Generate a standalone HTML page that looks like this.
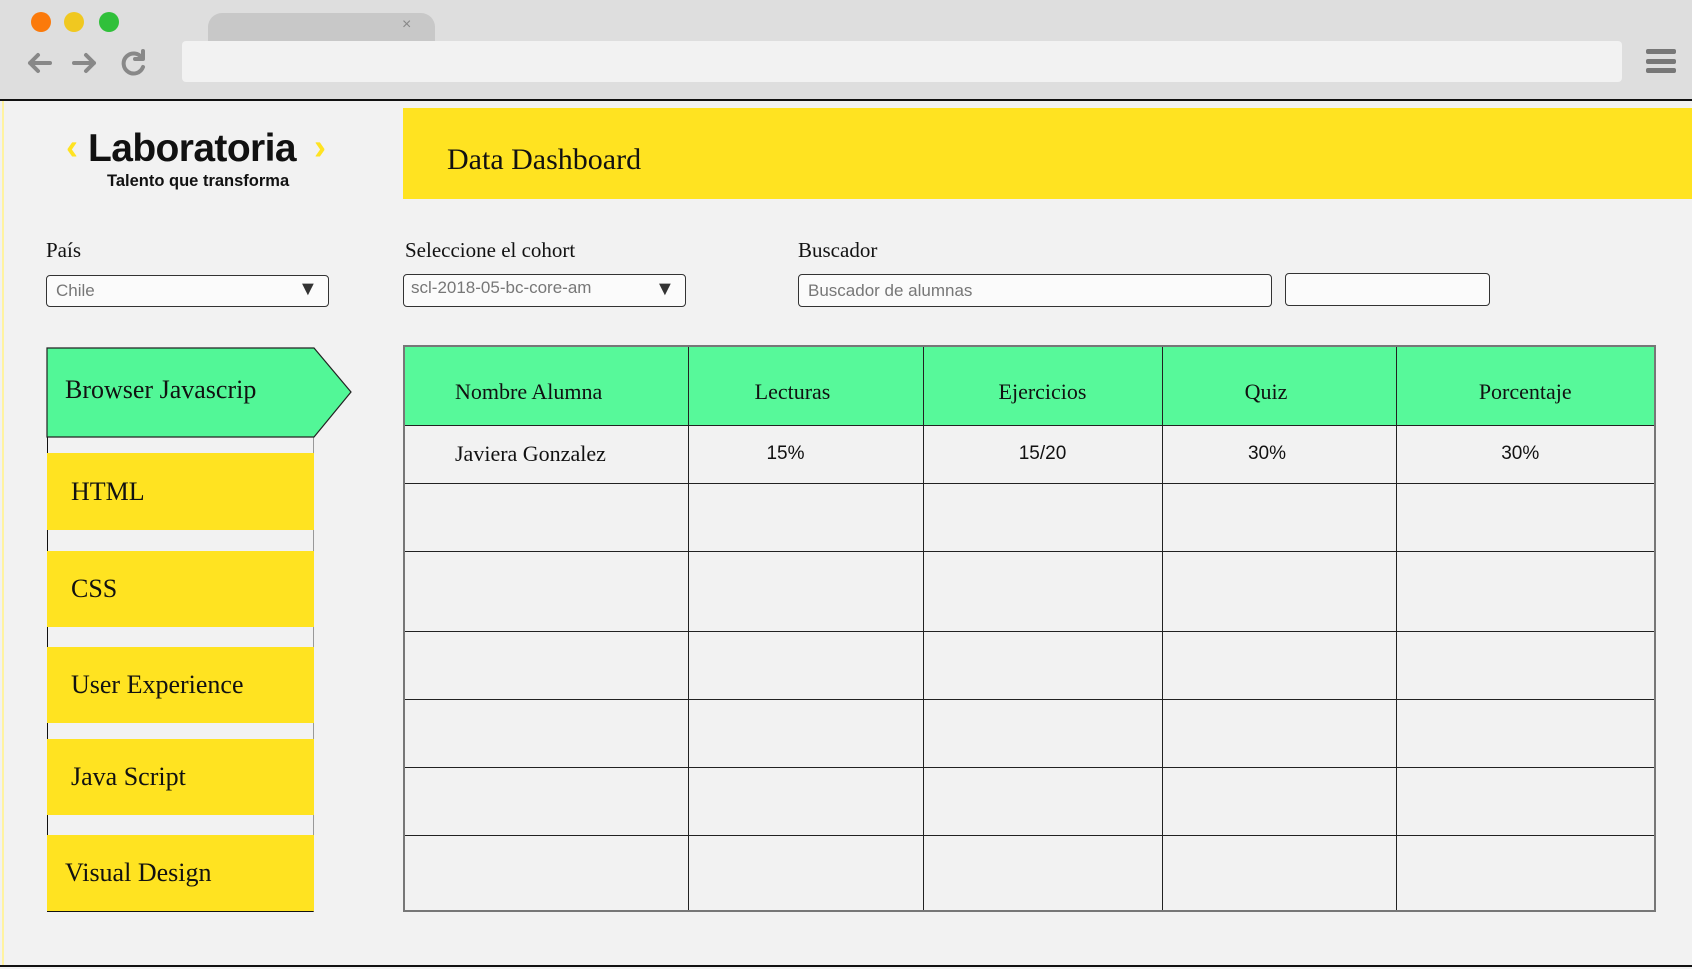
<!DOCTYPE html>
<html><head><meta charset="utf-8"><style>
*{margin:0;padding:0;box-sizing:border-box}
body{width:1692px;height:969px;overflow:hidden;background:#f2f2f2;position:relative;font-family:"Liberation Serif",serif;color:#111}
.abs{position:absolute}
.chrome{left:0;top:0;width:1692px;height:99px;background:#dedede}
.dot{width:20px;height:20px;border-radius:50%;top:12px}
.serif{font-family:"Liberation Serif",serif}
.sans{font-family:"Liberation Sans",sans-serif}
.box{background:#fbfbfb;border:1.5px solid #333;border-radius:4px}
.item{left:47px;width:267px;background:#ffe321;font-size:26px;padding-left:24px;display:flex;align-items:center}
table{border-collapse:collapse;position:absolute;left:403px;top:345px;width:1253px}
td{border:1.5px solid #222;text-align:center;font-size:22px}
</style></head><body>
<div class="abs chrome"></div>
<div class="abs dot" style="left:31px;background:#fb7a0b"></div>
<div class="abs dot" style="left:64px;background:#f0c820"></div>
<div class="abs dot" style="left:99px;background:#30c03a"></div>
<div class="abs" style="left:208px;top:13px;width:227px;height:28px;background:#c8c8c8;border-radius:14px 14px 0 0"></div>
<div class="abs sans" style="left:402px;top:16px;font-size:16px;color:#888">×</div>
<svg class="abs" style="left:24px;top:48px" width="130" height="30" viewBox="0 0 130 30"><g stroke="#888" stroke-width="4" fill="none" stroke-linecap="round" stroke-linejoin="round"><path d="M26 15H6M14 7l-8 8 8 8"/><path d="M50 15h20M62 7l8 8-8 8"/><path d="M118 10a10 10 0 1 0 1 9"/><path d="M119 3v8h-8"/></g></svg>
<div class="abs" style="left:182px;top:41px;width:1440px;height:41px;background:#f2f2f2;border-radius:4px"></div>
<div class="abs" style="left:1646px;top:49px;width:30px;height:5px;background:#777;border-radius:2px"></div>
<div class="abs" style="left:1646px;top:59px;width:30px;height:5px;background:#777;border-radius:2px"></div>
<div class="abs" style="left:1646px;top:68px;width:30px;height:5px;background:#777;border-radius:2px"></div>
<div class="abs" style="left:0;top:99px;width:1692px;height:2px;background:#111"></div>
<div class="abs" style="left:2px;top:101px;width:2px;height:866px;background:#fff3a0"></div>
<div class="abs" style="left:0;top:965px;width:1692px;height:2px;background:#111"></div>

<div class="abs sans" style="left:66px;top:126px;font-size:36px;color:#ffe321;font-weight:bold">‹</div>
<div class="abs sans" style="left:88px;top:127px;font-size:39px;font-weight:bold;letter-spacing:-0.6px">Laboratoria</div>
<div class="abs sans" style="left:314px;top:126px;font-size:36px;color:#ffe321;font-weight:bold">›</div>
<div class="abs sans" style="left:107px;top:172px;font-size:16.5px;font-weight:bold">Talento que transforma</div>

<div class="abs" style="left:403px;top:108px;width:1289px;height:91px;background:#ffe321"></div>
<div class="abs serif" style="left:447px;top:143px;font-size:30px">Data Dashboard</div>

<div class="abs serif" style="left:46px;top:238px;font-size:21px">País</div>
<div class="abs serif" style="left:405px;top:238px;font-size:21px">Seleccione el cohort</div>
<div class="abs serif" style="left:798px;top:238px;font-size:21px">Buscador</div>
<div class="abs box" style="left:46px;top:275px;width:283px;height:32px"></div>
<div class="abs sans" style="left:56px;top:281px;font-size:17px;color:#777">Chile</div>
<div class="abs sans" style="left:298px;top:278px;font-size:20px;color:#333">▼</div>
<div class="abs box" style="left:403px;top:274px;width:283px;height:33px"></div>
<div class="abs sans" style="left:411px;top:278px;font-size:17px;color:#777">scl-2018-05-bc-core-am</div>
<div class="abs sans" style="left:655px;top:278px;font-size:20px;color:#333">▼</div>
<div class="abs box" style="left:798px;top:274px;width:474px;height:33px"></div>
<div class="abs sans" style="left:808px;top:281px;font-size:17px;color:#777">Buscador de alumnas</div>
<div class="abs box" style="left:1285px;top:273px;width:205px;height:33px"></div>

<div class="abs" style="left:47px;top:437px;width:267px;height:475px;border-left:1.5px solid #111;border-right:1.5px solid #999;border-bottom:1.5px solid #111"></div>
<svg class="abs" style="left:46px;top:347px" width="310" height="92"><polygon points="1,1 268,1 305,45 268,90 1,90" fill="#52f797" stroke="#222" stroke-width="1.2"/></svg>
<div class="abs serif" style="left:65px;top:375px;font-size:26px">Browser Javascrip</div>
<div class="abs item serif" style="top:453px;height:77px;padding-left:24px">HTML</div>
<div class="abs item serif" style="top:551px;height:76px">CSS</div>
<div class="abs item serif" style="top:647px;height:76px">User Experience</div>
<div class="abs item serif" style="top:739px;height:76px">Java Script</div>
<div class="abs item serif" style="top:835px;height:76px;padding-left:18px">Visual Design</div>

<table class="serif" style="border:2px solid #777">
<tr style="height:79px;background:#57f99a"><td style="width:284px;text-align:left;padding-left:50px;padding-top:12px">Nombre Alumna</td><td style="width:235px;padding-top:12px;padding-right:26px">Lecturas</td><td style="width:239px;padding-top:12px">Ejercicios</td><td style="width:234px;padding-top:12px;padding-right:26px">Quiz</td><td style="padding-top:12px">Porcentaje</td></tr>
<tr style="height:58px"><td style="text-align:left;padding-left:50px">Javiera Gonzalez</td><td class="sans" style="font-size:19px;padding-right:40px">15%</td><td class="sans" style="font-size:19px">15/20</td><td class="sans" style="font-size:19px;padding-right:24px">30%</td><td class="sans" style="font-size:19px;padding-right:10px">30%</td></tr>
<tr style="height:68px"><td></td><td></td><td></td><td></td><td></td></tr>
<tr style="height:80px"><td></td><td></td><td></td><td></td><td></td></tr>
<tr style="height:68px"><td></td><td></td><td></td><td></td><td></td></tr>
<tr style="height:68px"><td></td><td></td><td></td><td></td><td></td></tr>
<tr style="height:68px"><td></td><td></td><td></td><td></td><td></td></tr>
<tr style="height:76px"><td></td><td></td><td></td><td></td><td></td></tr>
</table>
</body></html>
